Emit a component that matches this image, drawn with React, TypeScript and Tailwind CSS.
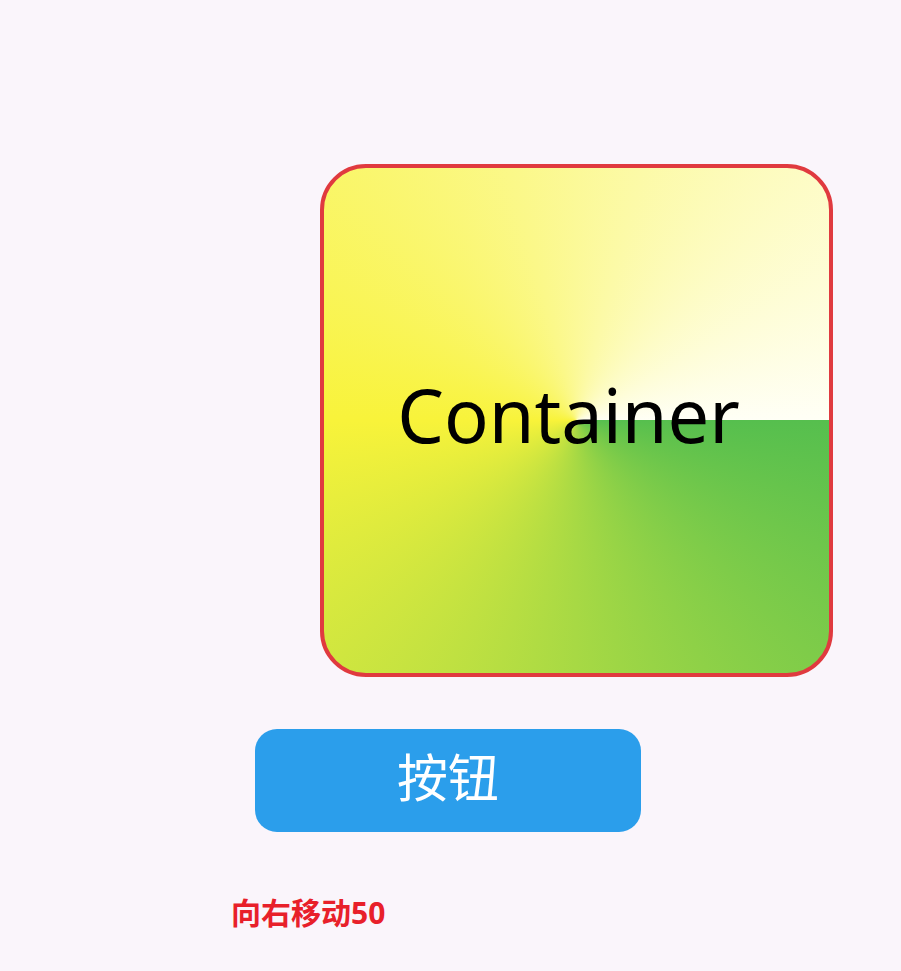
export default function App() {
  return (
    <div className="min-h-[971px] w-full bg-[#faf5fb] font-['Noto_Sans','Noto_Sans_CJK_SC',sans-serif]">
      <div className="flex flex-col items-start pt-[164px]">
        {/* Container with sweep gradient */}
        <div className="ml-[320px] flex h-[513px] w-[513px] items-center justify-center rounded-[46px] border-4 border-[#e03a3f] bg-[conic-gradient(from_90deg,#56bf4e,#f8f33a,#fffff6)]">
          <span className="-translate-x-[8px] -translate-y-[6px] text-[74px] leading-none text-black">Container</span>
        </div>

        {/* Button */}
        <button className="ml-[255px] mt-[52px] flex h-[103px] w-[386px] items-center justify-center rounded-[22px] bg-[#2b9eeb] text-[51px] leading-none text-white">
          <span className="-translate-y-[3px]">按钮</span>
        </button>

        {/* Label */}
        <p className="ml-[231px] mt-[66px] text-[30px] font-bold leading-none text-[#e8202a]">向右移动50</p>
      </div>
    </div>
  )
}
